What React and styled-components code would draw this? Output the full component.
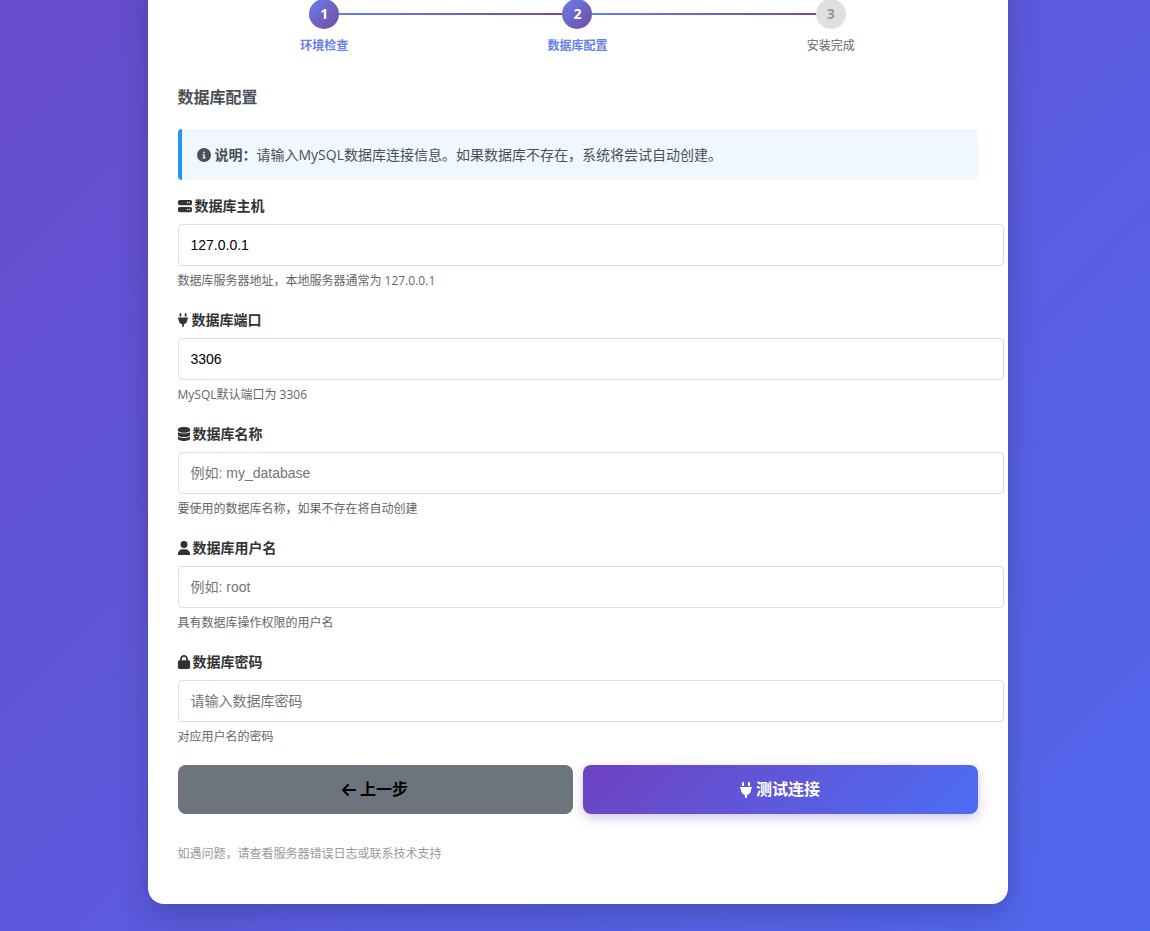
import React from "react";
import styled, { createGlobalStyle, css } from "styled-components";
import {
  FaArrowLeft,
  FaCircleInfo,
  FaDatabase,
  FaLock,
  FaPlug,
  FaServer,
  FaUser,
} from "react-icons/fa6";

const GlobalStyle = createGlobalStyle`
  body {
    margin: 0;
    color: #333;
    font-family: "Open Sans", "Noto Sans CJK SC", sans-serif;
    font-size: 14px;
  }
`;

const Page = styled.div`
  min-height: 100vh;
  box-sizing: border-box;
  padding: 0 0 27px 5px;
  overflow: hidden;
  background: linear-gradient(135deg, #6f42c1 -34%, #4c6ef5 120%);
`;

const Card = styled.main`
  max-width: 800px;
  margin: -31px auto 0;
  padding: 30px 30px 41px;
  border-radius: 16px;
  background: #fff;
  box-shadow: 0 10px 30px rgba(0, 0, 0, 0.2);
`;

const Steps = styled.ol`
  display: flex;
  margin: 0 0 30px;
  padding: 0 20px;
  list-style: none;
`;

const Step = styled.li`
  flex: 1;
  display: grid;
  grid-template-columns: 1fr 30px 1fr;
  align-items: center;
  row-gap: 8px;
`;

const StepNumber = styled.span`
  grid-column: 2;
  height: 30px;
  border-radius: 50%;
  color: ${(p) => (p.$active ? "#fff" : "#999")};
  background: ${(p) =>
    p.$active ? "linear-gradient(135deg, #667eea, #764ba2)" : "#e0e0e0"};
  font-weight: 700;
  line-height: 30px;
  text-align: center;
`;

const StepLine = styled.span`
  width: 200%;
  height: 2px;
  background: linear-gradient(90deg, #667eea, #764ba2);
`;

const StepLabel = styled.span`
  grid-column: 1 / -1;
  grid-row: 2;
  color: ${(p) => (p.$active ? "#667eea" : "#666")};
  font-size: 12px;
  font-weight: ${(p) => (p.$active ? 700 : 400)};
  line-height: 18px;
  text-align: center;
`;

const Title = styled.h1`
  margin: 0 0 20px;
  color: #495057;
  font-size: 16px;
  font-weight: 700;
  line-height: 24px;
`;

const Icon = styled.span`
  display: flex;
  flex: none;
  justify-content: center;
  width: ${(p) => p.$width}px;

  svg {
    flex: none;
  }
`;

const Notice = styled.div`
  display: flex;
  align-items: center;
  gap: 4px;
  margin-bottom: 16px;
  padding: 15px;
  border-left: 4px solid #2196f3;
  border-radius: 4px;
  color: #495057;
  background: #f0f7ff;
  line-height: 21px;

  p {
    margin: 0;
  }
`;

const Fields = styled.div`
  display: flex;
  flex-direction: column;
  gap: 20px;
`;

const Label = styled.label`
  display: flex;
  align-items: center;
  gap: 3px;
  margin-bottom: 9px;
  font-weight: 700;
  line-height: 19px;
`;

const Input = styled.input`
  display: block;
  box-sizing: content-box;
  width: 100%;
  height: 16px;
  padding: 12px;
  border: 1px solid #ddd;
  border-radius: 4px;
  color: #000;
  background: #fff;
  font-family: "Liberation Sans", "Noto Sans CJK SC", sans-serif;
  font-size: 14px;

  &::placeholder {
    color: #757575;
  }
`;

const Hint = styled.p`
  margin: 6px 0 0;
  color: #666;
  font-size: 12px;
  line-height: 18px;
`;

const Actions = styled.div`
  display: flex;
  gap: 10px;
  margin-top: 19px;
`;

const Button = styled.button`
  flex: 1;
  display: flex;
  align-items: center;
  justify-content: center;
  gap: 4px;
  padding: 12px;
  border: 0;
  border-radius: 8px;
  color: #000;
  background: #6c757d;
  font-family: inherit;
  font-size: 16px;
  font-weight: 700;
  line-height: 25px;
  cursor: pointer;

  ${(p) =>
    p.$primary &&
    css`
      color: #fff;
      background: linear-gradient(135deg, #6f42c1, #4c6ef5);
      box-shadow: 0 4px 12px rgba(111, 66, 193, 0.3);
    `}
`;

const Footer = styled.footer`
  margin-top: 31px;
  color: #999;
  font-size: 12px;
  line-height: 18px;
`;

const steps = [
  { label: "环境检查", active: true },
  { label: "数据库配置", active: true },
  { label: "安装完成", active: false },
];

const fields = [
  {
    id: "db_host",
    icon: <FaServer />,
    iconWidth: 14,
    label: "数据库主机",
    value: "127.0.0.1",
    hint: "数据库服务器地址，本地服务器通常为 127.0.0.1",
  },
  {
    id: "db_port",
    icon: <FaPlug />,
    iconWidth: 11,
    label: "数据库端口",
    value: "3306",
    hint: "MySQL默认端口为 3306",
  },
  {
    id: "db_name",
    icon: <FaDatabase />,
    iconWidth: 12,
    label: "数据库名称",
    placeholder: "例如: my_database",
    hint: "要使用的数据库名称，如果不存在将自动创建",
  },
  {
    id: "db_user",
    icon: <FaUser />,
    iconWidth: 12,
    label: "数据库用户名",
    placeholder: "例如: root",
    hint: "具有数据库操作权限的用户名",
  },
  {
    id: "db_pass",
    icon: <FaLock />,
    iconWidth: 12,
    label: "数据库密码",
    placeholder: "请输入数据库密码",
    type: "password",
    hint: "对应用户名的密码",
  },
];

export default function App() {
  return (
    <Page lang="zh-CN">
      <GlobalStyle />
      <Card>
        <Steps>
          {steps.map((step, i) => (
            <Step key={step.label}>
              <StepNumber $active={step.active}>{i + 1}</StepNumber>
              {i < steps.length - 1 && <StepLine />}
              <StepLabel $active={step.active}>{step.label}</StepLabel>
            </Step>
          ))}
        </Steps>
        <Title>数据库配置</Title>
        <Notice>
          <Icon $width={14}>
            <FaCircleInfo />
          </Icon>
          <p>
            <strong>说明：</strong>
            请输入MySQL数据库连接信息。如果数据库不存在，系统将尝试自动创建。
          </p>
        </Notice>
        <form onSubmit={(e) => e.preventDefault()}>
          <Fields>
            {fields.map((field) => (
              <div key={field.id}>
                <Label htmlFor={field.id}>
                  <Icon $width={field.iconWidth}>{field.icon}</Icon>
                  {field.label}
                </Label>
                <Input
                  id={field.id}
                  name={field.id}
                  type={field.type || "text"}
                  defaultValue={field.value}
                  placeholder={field.placeholder}
                  aria-describedby={`${field.id}_hint`}
                />
                <Hint id={`${field.id}_hint`}>{field.hint}</Hint>
              </div>
            ))}
          </Fields>
          <Actions>
            <Button type="button">
              <Icon $width={14}>
                <FaArrowLeft />
              </Icon>
              上一步
            </Button>
            <Button type="submit" $primary>
              <Icon $width={12}>
                <FaPlug />
              </Icon>
              测试连接
            </Button>
          </Actions>
        </form>
        <Footer>如遇问题，请查看服务器错误日志或联系技术支持</Footer>
      </Card>
    </Page>
  );
}
